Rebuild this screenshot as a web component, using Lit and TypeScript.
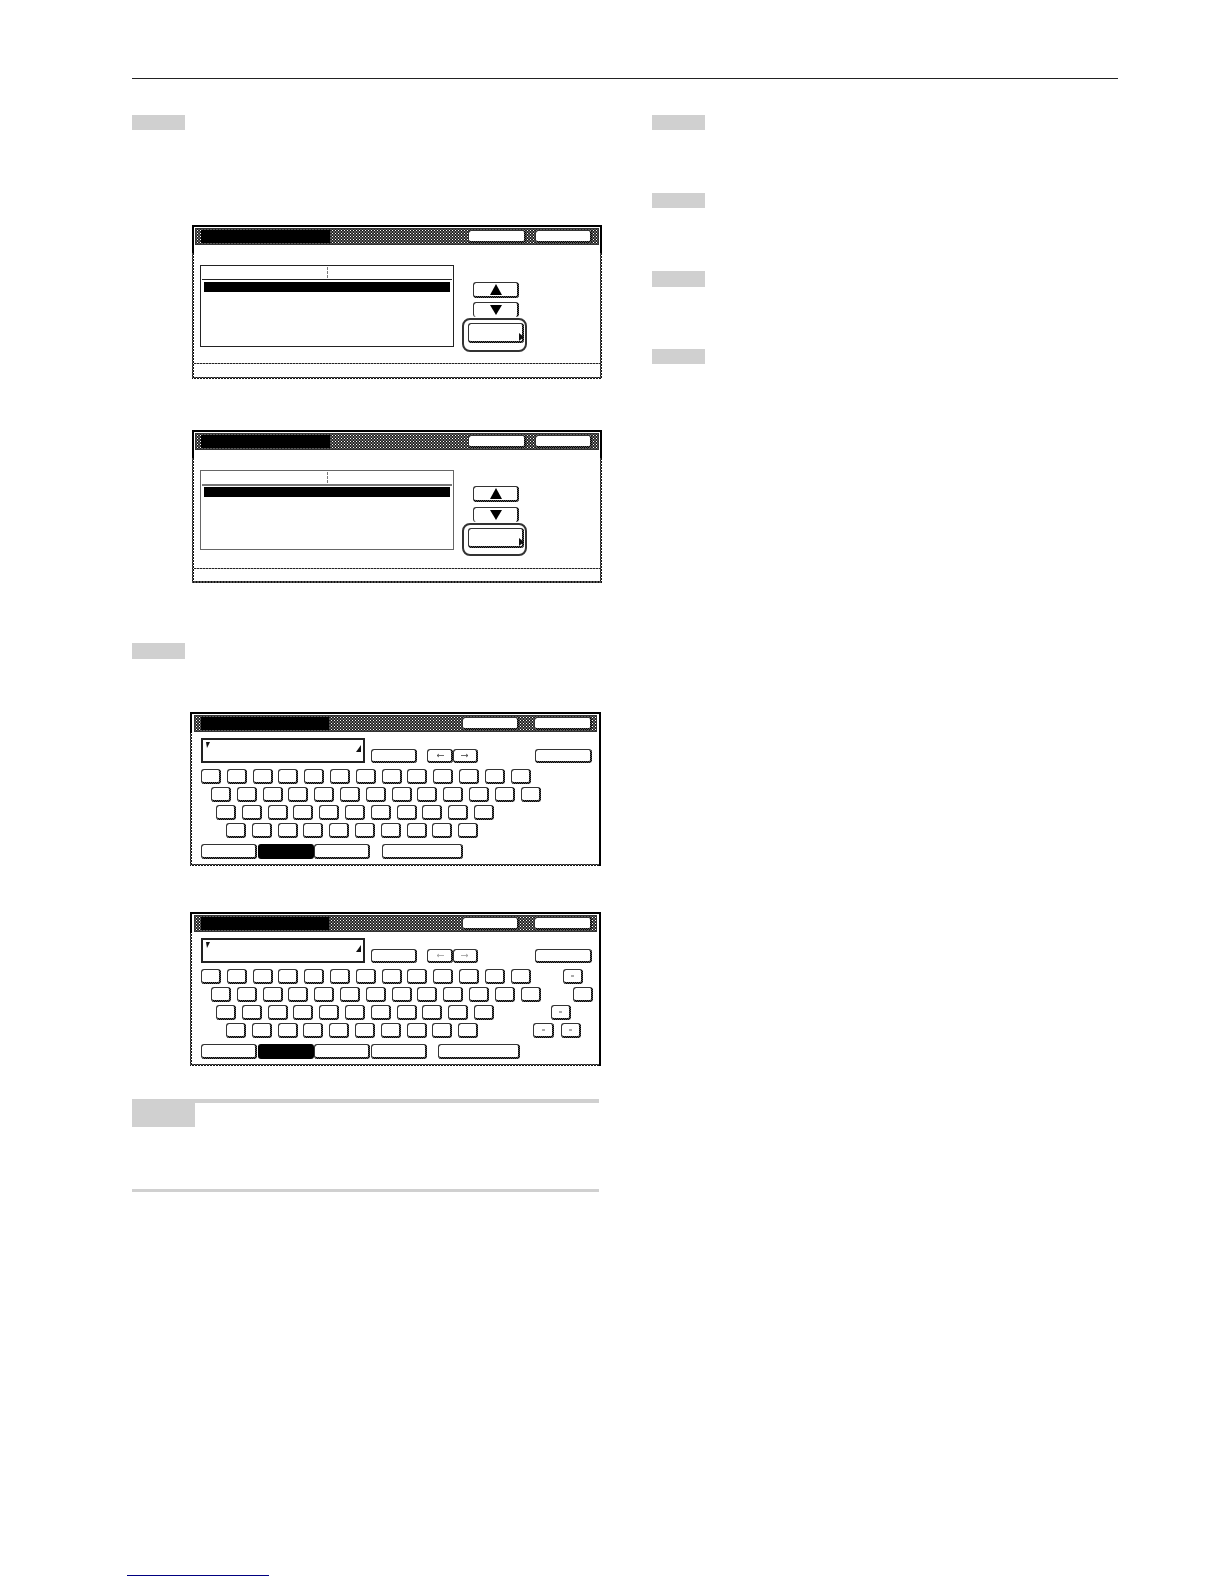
import { LitElement, html, css, svg } from "lit";
import { customElement } from "lit/decorators.js";

const ARROW_UP = svg`<polygon points="0,11 6,0 12,11" fill="#000"/>`;
const ARROW_DOWN = svg`<polygon points="0,0 12,0 6,10" fill="#000"/>`;

@customElement("app-root")
export class AppRoot extends LitElement {
  static styles = css`
    :host { display: block; width: 1224px; height: 1584px; background: #fff; }
    .page { box-sizing: border-box; width: 1224px; height: 1584px; display: flex; flex-direction: column;
      padding: 78px 106px 8px 132px; background: #fff; font-family: "Liberation Sans", sans-serif; }
    .rule { height: 1px; background: #222; flex: none; }
    .cols { display: flex; }
    .left { width: 467px; display: flex; flex-direction: column; }
    .right { margin-left: 53px; display: flex; flex-direction: column; }
    .step { width: 53px; height: 15px; background: #d0d0d0; flex: none; }
    .step.tall { height: 16px; }
    .m36 { margin-top: 36px; }
    .m60 { margin-top: 60px; }
    .m63 { margin-top: 63px; }
    .m62 { margin-top: 62px; }
    .link { margin-top: auto; margin-left: -5px; width: 142px; height: 1px; background: #000080; flex: none; }

    .panel { box-sizing: border-box; flex: none; border-top: 2px solid #000; padding: 0 2px 2px;
      background:
        linear-gradient(#000, #000) 0 0 / 100% 26px no-repeat,
        radial-gradient(circle, #fff .55px, transparent .85px) 0 0 / 3px 3px,
        radial-gradient(circle, #fff .55px, transparent .85px) 1.5px 1.5px / 3px 3px,
        #111; }
    .inner { background: #fff; height: 100%; display: flex; flex-direction: column; box-sizing: border-box; padding-top: 1px; }
    .p1 { width: 410px; height: 154px; margin: 95px 0 0 60px; }
    .p2 { width: 410px; height: 153px; margin: 51px 0 0 60px; }
    .p3 { width: 411px; height: 154px; margin: 53px 0 0 58px; }
    .p4 { width: 411px; height: 154px; margin: 46px 0 0 58px; }
    .p3, .p4 { background:
        linear-gradient(#000, #000) 0 0 / 100% 19px no-repeat,
        linear-gradient(#000, #000) 100% 0 / 2px 100% no-repeat,
        radial-gradient(circle, #fff .55px, transparent .85px) 0 0 / 3px 3px,
        radial-gradient(circle, #fff .55px, transparent .85px) 1.5px 1.5px / 3px 3px,
        #111; }

    .bar { box-sizing: border-box; height: 17px; flex: none; margin: 0 1px; display: flex; align-items: center;
      padding: 0 6px 0 5px; border: 1px solid #333;
      background:
        radial-gradient(circle, #fff .55px, transparent .85px) 0 0 / 3px 3px,
        radial-gradient(circle, #fff .55px, transparent .85px) 1.5px 1.5px / 3px 3px,
        #222; }
    .kb .bar { margin: 0 2px; padding: 0 4px 0 6px; }
    .ttl { width: 129px; height: 13px; background: #000; margin-right: auto; flex: none; }
    .kb .ttl { width: 128px; }
    .btn { box-sizing: border-box; border: 1px solid #333; border-right: 2px solid transparent; border-bottom: 2px solid transparent;
      background:
        linear-gradient(#fff, #fff) padding-box,
        conic-gradient(#000 25%, #555 0 50%, #000 0 75%, #555 0) 0 0 / 2px 2px border-box;
      border-radius: 3px; flex: none; display: flex; align-items: center; justify-content: center; }
    .bar .btn { height: 13px; }
    .bar .b1 { width: 58px; }
    .bar .b2 { width: 57px; margin-left: 9px; }
    .kb .bar .b1 { width: 57px; }
    .kb .bar .b2 { width: 58px; margin-left: 15px; }

    .body { flex: none; height: 118px; display: flex; box-sizing: border-box; padding: 20px 0 0 6px; }
    .list { box-sizing: border-box; width: 254px; height: 82px; border: 1px solid #222; padding: 0 1px; flex: none; }
    .lhead { box-sizing: border-box; height: 14px; border-bottom: 1px solid #222; display: flex; justify-content: center; padding: 1px 0 0; }
    .lhead span { width: 0; height: 11px; border-left: 1px dashed #777; }
    .lrow { height: 10px; margin: 2px 2px 0; background: #000; }
    .p2 .list { height: 80px; border-color: #666; }
    .p2 .lhead { height: 15px; border-bottom: 2px solid #777; }
    .p2 .lrow { margin-top: 1px; }

    .side { margin-left: 8px; width: 65px; flex: none; display: flex; flex-direction: column; }
    .up { width: 46px; height: 16px; margin: 17px 0 0 11px; padding-left: 1px; }
    .down { width: 46px; height: 15px; margin: 4px 0 0 11px; padding: 2px 0 0 1px; border-bottom: none; align-items: flex-start; }
    .hl { box-sizing: border-box; width: 65px; height: 34px; margin-top: 1px; border: 2px solid #333; border-radius: 8px; padding: 3px 4px; }
    .more { width: 56px; height: 20px; justify-content: flex-end; align-items: flex-end; }
    .more svg { margin: 0 -2px 0 0; }
    .p2 .up { margin-top: 16px; }
    .p2 .down { margin-top: 5px; }
    .p2 .hl { height: 33px; }
    .foot { flex: 1; background: repeating-linear-gradient(90deg, #222 0 2px, #999 2px 3px) 0 0 / 100% 1px no-repeat; }

    .kbtop { display: flex; align-items: flex-end; padding: 6px 0 0 9px; flex: none; }
    .input { box-sizing: border-box; width: 164px; height: 25px; border: 2px solid #222; padding: 2px 2px 0 3px; display: flex; justify-content: space-between; align-items: flex-start; }
    .input .br { margin-top: 3px; }
    .back { width: 46px; height: 14px; margin-left: 6px; }
    .al { width: 26px; height: 14px; margin-left: 10px; }
    .ar { width: 25px; height: 14px; }
    .kbr { width: 57px; height: 14px; margin-left: 57px; }
    .rows { display: flex; flex-direction: column; gap: 3px; margin-top: 6px; flex: none; }
    .row { display: flex; gap: 5.8px; height: 15px; }
    .r1 { padding-left: 9px; }
    .r2 { padding-left: 19px; }
    .r3 { padding-left: 24px; }
    .r4 { padding-left: 34px; }
    .key { width: 20px; height: 15px; }
    .key span { width: 3px; height: 2px; background: #aaa; }
    .x26 { margin-left: 26.2px; }
    .x51 { margin-left: 51.2px; }
    .x49 { margin-left: 49.2px; }
    .wide { width: 21px; }
    .g1 { margin-left: 1.2px; }
    .tabs { display: flex; padding: 6px 0 0 9px; flex: none; }
    .tab { width: 56px; height: 15px; }
    .tab.on { background: #000; border-color: #000; margin: 0 0 0 1px; }
    .t5 { margin-left: 1px; }
    .wide12 { width: 81px; margin-left: 12px; }
    .wide11 { width: 82px; margin-left: 11px; }

    .note { box-sizing: border-box; flex: none; height: 93px; margin-top: 33px; border-bottom: 3px solid #d0d0d0; display: flex; align-items: flex-start; }
    .nlabel { width: 63px; height: 28px; background: #d0d0d0; flex: none; }
    .nbar { flex: 1; height: 4px; background: #d0d0d0; }
  `;

  private bar() {
    return html`<div class="bar"><div class="ttl"></div><div class="btn b1"></div><div class="btn b2"></div></div>`;
  }

  private listPanel(cls: string) {
    return html`<div class="panel ${cls}"><div class="inner">
      ${this.bar()}
      <div class="body">
        <div class="list"><div class="lhead"><span></span></div><div class="lrow"></div></div>
        <div class="side">
          <div class="btn up"><svg width="12" height="11" viewBox="0 0 12 11">${ARROW_UP}</svg></div>
          <div class="btn down"><svg width="12" height="10" viewBox="0 0 12 10">${ARROW_DOWN}</svg></div>
          <div class="hl"><div class="btn more"><svg width="5" height="8" viewBox="0 0 5 8"><polygon points="0,0 5,4 0,8" fill="#111"/></svg></div></div>
        </div>
      </div>
      <div class="foot"></div>
    </div></div>`;
  }

  private keys(n: number) {
    return Array.from({ length: n }, () => html`<div class="btn key"></div>`);
  }

  private kbPanel(cls: string, extended: boolean) {
    const stroke = extended ? "#999" : "#444";
    const left = html`<svg width="8" height="5" viewBox="0 0 8 5"><path d="M8 2.5H1M3 1 1 2.5 3 4" fill="none" stroke="${stroke}" stroke-width=".8"/></svg>`;
    const right = html`<svg width="8" height="5" viewBox="0 0 8 5"><path d="M0 2.5h7M5 1l2 1.5L5 4" fill="none" stroke="${stroke}" stroke-width=".8"/></svg>`;
    const dot = html`<span></span>`;
    return html`<div class="panel kb ${cls}"><div class="inner">
      ${this.bar()}
      <div class="kbtop">
        <div class="input">
          <svg width="4" height="6" viewBox="0 0 4 6"><polygon points="0,0 4,0 1,6" fill="#111"/></svg>
          <svg class="br" width="5" height="7" viewBox="0 0 5 7"><polygon points="5,0 5,7 0,7" fill="#111"/></svg>
        </div>
        <div class="btn back"></div>
        <div class="btn al">${left}</div>
        <div class="btn ar">${right}</div>
        <div class="btn kbr"></div>
      </div>
      <div class="rows">
        <div class="row r1">${this.keys(13)}${extended ? html`<div class="btn key x26">${dot}</div>` : ""}</div>
        <div class="row r2">${this.keys(13)}${extended ? html`<div class="btn key x26"></div>` : ""}</div>
        <div class="row r3">${this.keys(11)}${extended ? html`<div class="btn key x51">${dot}</div>` : ""}</div>
        <div class="row r4">${this.keys(10)}${extended
          ? html`<div class="btn key wide x49">${dot}</div><div class="btn key g1">${dot}</div>`
          : ""}</div>
      </div>
      <div class="tabs">
        <div class="btn tab"></div>
        <div class="btn tab on"></div>
        <div class="btn tab"></div>
        ${extended
          ? html`<div class="btn tab t5"></div><div class="btn tab wide11"></div>`
          : html`<div class="btn tab wide12"></div>`}
      </div>
    </div></div>`;
  }

  render() {
    return html`<div class="page">
      <div class="rule"></div>
      <div class="cols">
        <div class="left">
          <div class="step m36"></div>
          ${this.listPanel("p1")}
          ${this.listPanel("p2")}
          <div class="step tall m60"></div>
          ${this.kbPanel("p3", false)}
          ${this.kbPanel("p4", true)}
          <div class="note"><div class="nlabel"></div><div class="nbar"></div></div>
        </div>
        <div class="right">
          <div class="step m36"></div>
          <div class="step m63"></div>
          <div class="step tall m63"></div>
          <div class="step m62"></div>
        </div>
      </div>
      <div class="link"></div>
    </div>`;
  }
}
